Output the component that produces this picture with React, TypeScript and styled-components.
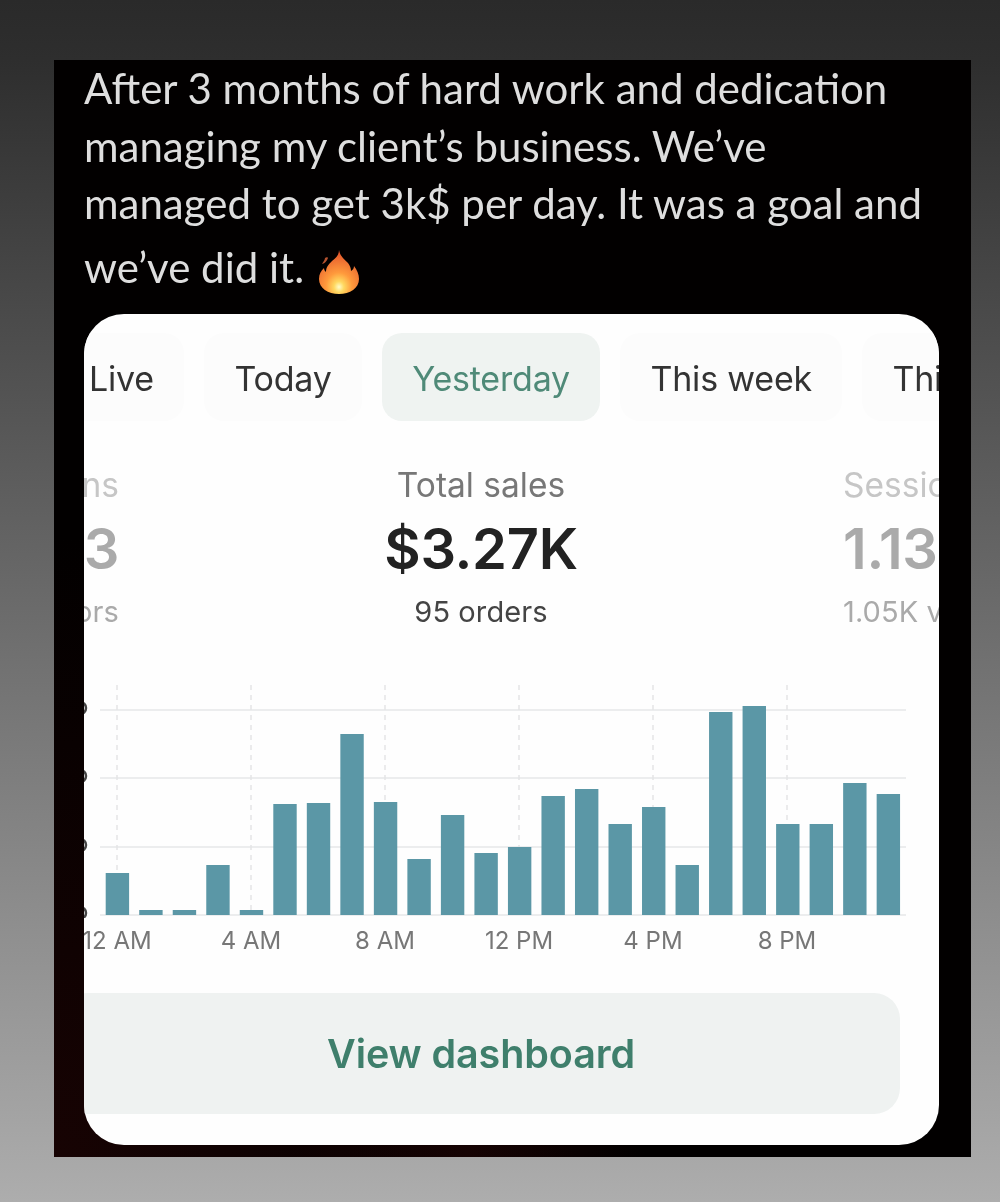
import styled, { createGlobalStyle } from "styled-components"

const GlobalStyle = createGlobalStyle`
  html, body {
    margin: 0;
    padding: 0;
  }
  body {
    background: linear-gradient(180deg, #2a2a2a 0%, #2e2e2e 5%, #adadad 100%);
    font-family: "Inter", "Liberation Sans", sans-serif;
  }
`

const Page = styled.div`
  box-sizing: border-box;
  width: 1000px;
  height: 1202px;
  padding: 60px 29px 45px 54px;
`

const Panel = styled.div`
  box-sizing: border-box;
  height: 1097px;
  padding: 0 32px 12px 30px;
  display: flex;
  flex-direction: column;
  background:
    radial-gradient(ellipse at 0% 100%, #170303 0%, rgba(23, 3, 3, 0) 40%),
    radial-gradient(ellipse at 45% 100%, #160303 0%, rgba(22, 3, 3, 0) 25%),
    #020000;
`

const Post = styled.div`
  height: 254px;
  flex: none;
  color: #dedede;
  font-family: "Lato", "Noto Sans", sans-serif;
  font-size: 42px;
  filter: blur(0.4px);
`

const Line = styled.div<{ $tall?: boolean }>`
  height: ${(p) => (p.$tall ? "64px" : "57.5px")};
  line-height: 57.5px;
  white-space: nowrap;
  display: flex;
  align-items: ${(p) => (p.$tall ? "flex-end" : "flex-start")};
  gap: 13px;
`

const Flame = styled.svg`
  width: 44px;
  height: 46px;
  flex: none;
  margin-bottom: 2px;
`

const Card = styled.div`
  flex: 1;
  background: #fefefe;
  border-radius: 40px;
  overflow: hidden;
  filter: blur(0.4px);
`

const Tabs = styled.div`
  display: flex;
  gap: 20.5px;
  margin: 19px 0 0 -25px;
  white-space: nowrap;
`

const Tab = styled.div<{ $active?: boolean }>`
  flex: none;
  height: 88px;
  line-height: 91px;
  padding: 0 30px;
  border-radius: 20px;
  font-size: 34px;
  letter-spacing: -0.2px;
  color: ${(p) => (p.$active ? "#4f8a78" : "#333")};
  background: ${(p) => (p.$active ? "#eff3f1" : "#fcfcfc")};
`

const Metrics = styled.div`
  display: grid;
  grid-template-columns: 35px 1fr 96px;
  margin-top: 44px;
`

const Metric = styled.div<{ $align: string }>`
  display: flex;
  flex-direction: column;
  align-items: ${(p) => p.$align};
  white-space: nowrap;
  min-width: 0;
`

const MetricLabel = styled.div<{ $faded?: boolean }>`
  height: 40px;
  line-height: 40px;
  font-size: 33.5px;
  color: ${(p) => (p.$faded ? "#c6c6c6" : "#777")};
`

const MetricValue = styled.div<{ $faded?: boolean }>`
  height: 62px;
  margin-top: 13px;
  line-height: 62px;
  font-size: 56px;
  font-weight: 600;
  letter-spacing: -0.3px;
  color: ${(p) => (p.$faded ? "#aaa" : "#222")};
`

const MetricSub = styled.div<{ $faded?: boolean }>`
  height: 34px;
  margin-top: 15px;
  line-height: 34px;
  font-size: 29px;
  letter-spacing: 0.1px;
  color: ${(p) => (p.$faded ? "#aaa" : "#444")};
`

const ChartSvg = styled.svg`
  display: block;
  width: 855px;
  height: 233px;
  margin-top: 56px;
`

const Axis = styled.div`
  display: flex;
  margin: 8px 0 0 -34px;
`

const AxisLabel = styled.div`
  flex: none;
  width: 134px;
  text-align: center;
  font-size: 24px;
  line-height: 30px;
  color: #777;
  white-space: nowrap;
`

const DashboardButton = styled.div`
  height: 121px;
  margin: 37px 39px 0 -22px;
  border-radius: 26px;
  background: #eff2f1;
  display: flex;
  align-items: center;
  justify-content: center;
  font-size: 39.5px;
  font-weight: 600;
  letter-spacing: -0.1px;
  color: #3f7f6c;
`

const tabs = ["Live", "Today", "Yesterday", "This week", "This month"]
const hours = ["12 AM", "4 AM", "8 AM", "12 PM", "4 PM", "8 PM"]

// bar tops in page y, baseline sits at 915
const barTops = [
  873, 910, 910, 865, 910, 804, 803, 734, 802, 859, 815, 853,
  847, 796, 789, 824, 807, 865, 712, 706, 824, 824, 783, 794,
]

const Chart = () => (
  <ChartSvg viewBox="84 685 855 233">
    {[710, 778, 847, 915].map((y) => (
      <g key={y}>
        <line x1="100" x2="906" y1={y} y2={y} stroke="#e6e7e8" strokeWidth="1.5" />
        <circle cx="80" cy={y - 2} r="6" fill="none" stroke="#444" strokeWidth="2.5" />
      </g>
    ))}
    {[117, 251, 385, 519, 653, 787].map((x) => (
      <line key={x} x1={x} x2={x} y1="685" y2="915" stroke="#e4e5e6" strokeWidth="1.5" strokeDasharray="5 5" />
    ))}
    {barTops.map((top, i) => (
      <rect key={i} x={105.7 + i * 33.52} y={top} width="23.4" height={915 - top} fill="#5b97a6" />
    ))}
  </ChartSvg>
)

const FlameIcon = () => (
  <Flame viewBox="0 0 44 46">
    <defs>
      <radialGradient id="flameFill" cx="50%" cy="84%" r="78%">
        <stop offset="0%" stopColor="#fffcc8" />
        <stop offset="16%" stopColor="#ffd860" />
        <stop offset="42%" stopColor="#ff9a3c" />
        <stop offset="100%" stopColor="#e4572c" />
      </radialGradient>
    </defs>
    <path
      d="M22 1c1 6 5 9 9 13 2 3 3 5 3 8 2-1 3-3 3-5 3 4 5 8 5 13 0 9-9 15-20 15S2 39 2 30c0-5 2-8 5-11 0 2 1 3 2 4 0-5 3-8 6-11 4-3 7-6 7-11z"
      fill="url(#flameFill)"
    />
    <path d="M8 9c0 2-2 4-3 6 2 0 5-3 6-6 0-1-2-1-3 0z" fill="#b5522f" />
  </Flame>
)

export default function App() {
  return (
    <>
      <GlobalStyle />
      <Page>
        <Panel>
          <Post>
            <Line>After 3 months of hard work and dedication</Line>
            <Line>managing my client’s business. We’ve</Line>
            <Line>managed to get 3k$ per day. It was a goal and</Line>
            <Line $tall>
              we’ve did it.
              <FlameIcon />
            </Line>
          </Post>
          <Card>
            <Tabs>
              {tabs.map((t) => (
                <Tab key={t} $active={t === "Yesterday"}>
                  {t}
                </Tab>
              ))}
            </Tabs>
            <Metrics>
              <Metric $align="flex-end">
                <MetricLabel $faded>Conversions</MetricLabel>
                <MetricValue $faded>3</MetricValue>
                <MetricSub $faded>visitors</MetricSub>
              </Metric>
              <Metric $align="center">
                <MetricLabel>Total sales</MetricLabel>
                <MetricValue>$3.27K</MetricValue>
                <MetricSub>95 orders</MetricSub>
              </Metric>
              <Metric $align="flex-start">
                <MetricLabel $faded>Sessions</MetricLabel>
                <MetricValue $faded>1.13K</MetricValue>
                <MetricSub $faded>1.05K visitors</MetricSub>
              </Metric>
            </Metrics>
            <Chart />
            <Axis>
              {hours.map((h) => (
                <AxisLabel key={h}>{h}</AxisLabel>
              ))}
            </Axis>
            <DashboardButton>View dashboard</DashboardButton>
          </Card>
        </Panel>
      </Page>
    </>
  )
}
